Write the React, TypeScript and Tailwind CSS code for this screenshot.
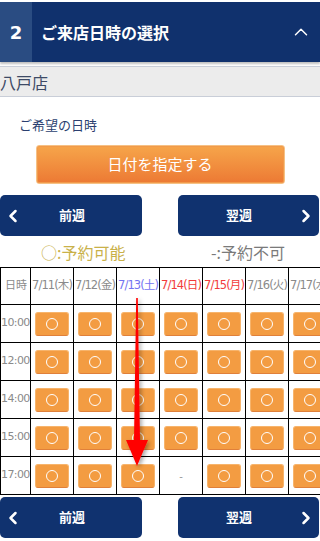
import { ChevronLeft, ChevronRight, ChevronUp } from "lucide-react";

const dates = [
  { label: "7/11(木)", color: "text-[#8a8a8a]" },
  { label: "7/12(金)", color: "text-[#8a8a8a]" },
  { label: "7/13(土)", color: "text-[#7474f2]" },
  { label: "7/14(日)", color: "text-[#f23b3b]" },
  { label: "7/15(月)", color: "text-[#f23b3b]" },
  { label: "7/16(火)", color: "text-[#8a8a8a]" },
  { label: "7/17(水)", color: "text-[#8a8a8a]" },
];

const times = ["10:00", "12:00", "14:00", "15:00", "17:00"];

function Slot() {
  return (
    <span className="mx-auto flex h-[24px] w-[34px] items-center justify-center rounded-[3px] border border-[#f7b46c] border-b-[#e0803a] bg-[#f39c42]">
      <span className="h-[12px] w-[12px] rounded-full border-[1.5px] border-white" />
    </span>
  );
}

function WeekNav() {
  return (
    <div className="flex h-[41px] justify-between">
      <button className="flex w-[142px] items-center rounded-[5px] bg-[#10326f] text-white">
        <ChevronLeft size={20} strokeWidth={3} className="ml-[3px]" />
        <span className="ml-[36px] text-[13px] font-bold">前週</span>
      </button>
      <button className="mr-[1px] flex w-[141px] items-center justify-end rounded-[5px] bg-[#10326f] text-white">
        <span className="mr-[44px] text-[13px] font-bold">翌週</span>
        <ChevronRight size={20} strokeWidth={3} className="mr-[3px]" />
      </button>
    </div>
  );
}

export default function App() {
  return (
    <div
      className="relative h-[541px] w-[320px] overflow-hidden bg-white"
      style={{ fontFamily: '"DejaVu Sans", "Noto Sans CJK JP", sans-serif' }}
    >
      <div className="mt-[2px] flex h-[60px] items-center bg-[#10316d] text-white shadow-[0_2px_2px_rgba(0,0,0,0.25)]">
        <div className="flex h-full w-[32px] items-center justify-center bg-[#2a4c82] text-[18px] font-bold">2</div>
        <div className="ml-[9px] flex-1 text-[16px] font-bold" style={{ fontFamily: '"Noto Sans CJK JP", sans-serif' }}>
          ご来店日時の選択
        </div>
        <ChevronUp size={22} strokeWidth={1.6} className="mr-[8px]" />
      </div>

      <div className="mt-[4px] flex h-[31px] items-center border-y border-[#c9ced8] bg-[#ececec] text-[16px] text-[#3d4a66]" style={{ fontFamily: '"Noto Sans CJK JP", sans-serif' }}>
        八戸店
      </div>

      <div className="mt-[19px] pl-[19px] text-[13px] leading-[18px] text-[#2b3f70]" style={{ fontFamily: '"Noto Sans CJK JP", sans-serif' }}>
        ご希望の日時
      </div>

      <div className="mt-[11px] flex justify-center">
        <button className="flex h-[39px] w-[249px] items-center justify-center rounded-[3px] border border-[#f6c184] bg-gradient-to-b from-[#f6a54a] to-[#ec7934] text-[15px] text-white shadow-[inset_0_0_0_1px_#f19a4c]" style={{ fontFamily: '"Noto Sans CJK JP", sans-serif' }}>
          日付を指定する
        </button>
      </div>

      <div className="mt-[11px]">
        <WeekNav />
      </div>

      <div className="flex h-[31px] items-center text-[16px]" style={{ fontFamily: '"Noto Sans CJK JP", sans-serif' }}>
        <div className="w-1/2 pl-[41px] text-[#c9b14a]">○:予約可能</div>
        <div className="w-1/2 pl-[51px] text-[#7a7a7a]">-:予約不可</div>
      </div>

      <div className="overflow-hidden">
        <table className="w-[331px] table-fixed border-collapse text-[12px]">
          <colgroup>
            <col className="w-[30px]" />
            {dates.map((d) => (
              <col key={d.label} className="w-[43px]" />
            ))}
          </colgroup>
          <thead>
            <tr className="h-[37px]">
              <th className="border border-black pl-[1px] text-[11px] font-normal text-[#8a8a8a]">日時</th>
              {dates.map((d) => (
                <th key={d.label} className={`whitespace-nowrap border border-black p-0 text-[11.5px] font-normal tracking-[-0.9px] ${d.color}`}>
                  {d.label}
                </th>
              ))}
            </tr>
          </thead>
          <tbody>
            {times.map((t) => (
              <tr key={t} className="h-[38px]">
                <td className="whitespace-nowrap border border-black p-0 pr-[1px] text-right text-[11px] tracking-[-0.6px] text-[#8a8a8a]">{t}</td>
                {dates.map((d, i) => (
                  <td key={d.label} className="border border-black p-0 text-center">
                    {t === "17:00" && i === 3 ? <span className="text-[10px] text-[#999]">-</span> : <Slot />}
                  </td>
                ))}
              </tr>
            ))}
          </tbody>
        </table>
      </div>

      <div className="mt-[2px]">
        <WeekNav />
      </div>

      <svg className="absolute left-0 top-0" width="320" height="541" viewBox="0 0 320 541">
        <defs>
          <filter id="sh" x="-50%" y="-10%" width="200%" height="130%">
            <feDropShadow dx="2" dy="2" stdDeviation="2" floodColor="#000" floodOpacity="0.35" />
          </filter>
        </defs>
        <polygon
          points="136.2,298 137.8,298 140,440 148,440 137,466 126,440 134,440"
          fill="#ff0000"
          filter="url(#sh)"
        />
      </svg>
    </div>
  );
}
